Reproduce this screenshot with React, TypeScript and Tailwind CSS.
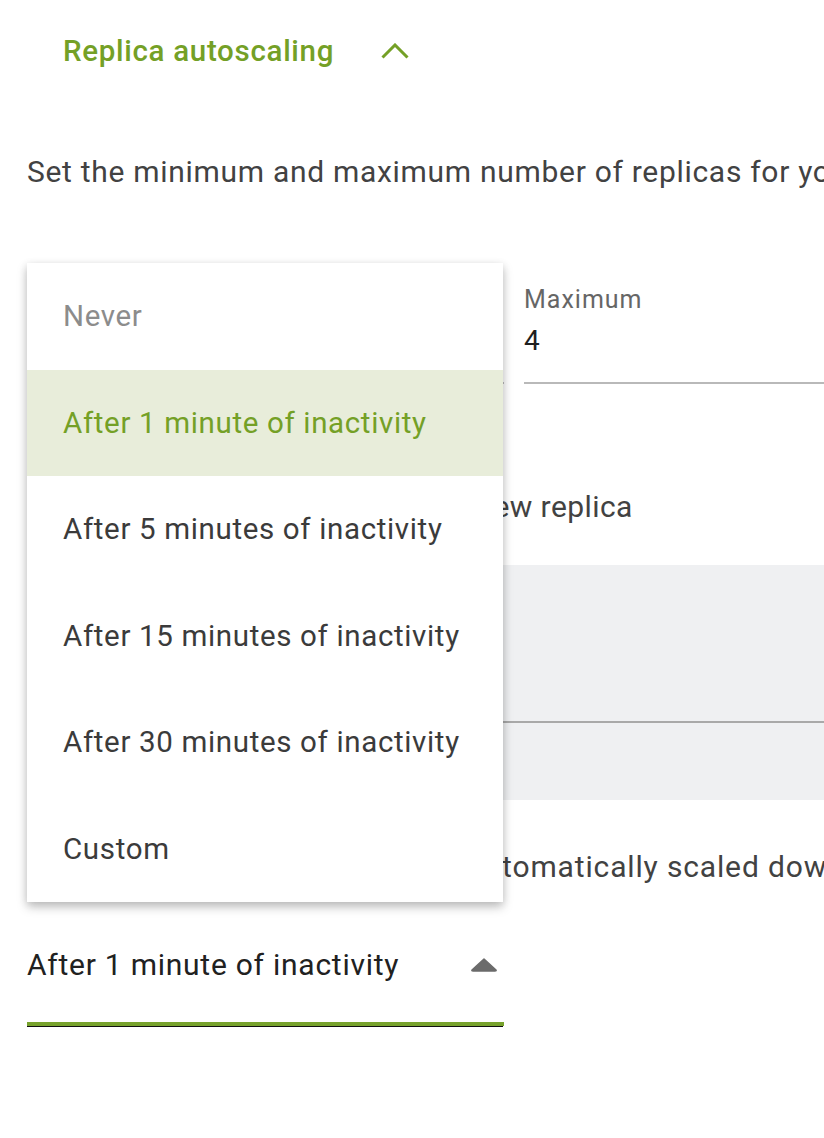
import React from "react";

const items = [
  "Never",
  "After 1 minute of inactivity",
  "After 5 minutes of inactivity",
  "After 15 minutes of inactivity",
  "After 30 minutes of inactivity",
  "Custom",
];

export default function App() {
  return (
    <div className="relative w-[824px] h-[1138px] overflow-hidden bg-white font-['Roboto','Liberation_Sans',sans-serif]">
      <div className="pl-[27px]">
        <div className="h-[102px] flex items-center pl-[36px]">
          <span className="text-[29.5px] tracking-[0.7px] leading-[40px] font-medium text-[#74a026] whitespace-nowrap">
            Replica autoscaling
          </span>
          <svg className="ml-[47px]" width="28" height="16" viewBox="0 0 28 16" fill="none">
            <path d="M1.5 14.5 L14 2 L26.5 14.5" stroke="#74a026" strokeWidth="3" />
          </svg>
        </div>
        <p className="mt-[50px] text-[30px] tracking-[0.7px] leading-[40px] text-[#424242] whitespace-nowrap">
          Set the minimum and maximum number of replicas for your deployment.
        </p>
        <div className="mt-[93px] flex gap-[20px]">
          <div className="w-[477px] shrink-0">
            <div className="text-[25px] tracking-[1px] leading-[30px] text-[#666]">Minimum</div>
            <div className="mt-[6px] text-[28px] leading-[40px] text-[#1f1f1f]">1</div>
            <div className="mt-[21px] h-[2px] bg-[#b9b9b9]" />
          </div>
          <div className="w-[400px] shrink-0">
            <div className="text-[25px] tracking-[1px] leading-[30px] text-[#666]">Maximum</div>
            <div className="mt-[6px] text-[28px] leading-[40px] text-[#1f1f1f]">4</div>
            <div className="mt-[21px] h-[2px] bg-[#b9b9b9]" />
          </div>
        </div>
        <p className="mt-[103px] text-[30px] tracking-[0.42px] leading-[40px] text-[#424242] whitespace-nowrap">
          Seconds to wait before adding a new replica
        </p>
        <div className="mt-[38px] w-[900px] h-[235px] bg-[#eff0f2] flex flex-col">
          <div className="mt-[156px] h-[2px] bg-[#a9a9a9]" />
        </div>
        <p className="mt-[47px] text-[30px] tracking-[0.85px] leading-[40px] text-[#424242] whitespace-nowrap">
          Choose when your replicas are automatically scaled down to zero
        </p>
        <div className="mt-[58px] w-[477px]">
          <div className="flex items-center justify-between pr-[7px]">
            <span className="text-[30px] tracking-[0.75px] leading-[40px] text-[#212121] whitespace-nowrap">
              After 1 minute of inactivity
            </span>
            <svg width="26" height="14" viewBox="0 0 26 14">
              <path d="M13 1 L25 12 Q25.5 13 24 13 L2 13 Q0.5 13 1 12 Z" fill="#6b6b6b" stroke="#6b6b6b" strokeWidth="1.5" strokeLinejoin="round" />
            </svg>
          </div>
          <div className="mt-[37px] h-[4px] bg-[#77a22c]" />
          <div className="h-[1px] mr-[1px] bg-[#111]" />
        </div>
      </div>

      <div className="absolute left-[27px] top-[263px] w-[476px] bg-white shadow-[0_5px_10px_rgba(0,0,0,0.22),0_2px_8px_rgba(0,0,0,0.1)]">
        {items.map((t, i) => (
          <div
            key={t}
            className={
              "h-[106.5px] flex items-center pl-[36px] text-[29.5px] tracking-[0.65px] whitespace-nowrap " +
              (i === 0
                ? "text-[#8c8c8c]"
                : i === 1
                ? "bg-[#e8edda] text-[#74a026]"
                : "text-[#3b3b3b]")
            }
          >
            {t}
          </div>
        ))}
      </div>
    </div>
  );
}
